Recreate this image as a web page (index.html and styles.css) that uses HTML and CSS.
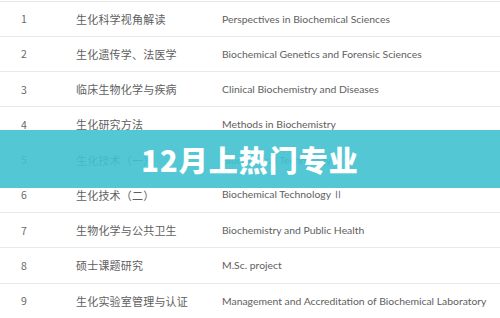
FILE: index.html
```html
<!DOCTYPE html>
<html lang="zh">
<head>
<meta charset="utf-8">
<link rel="stylesheet" href="styles.css">
</head>
<body>
<div class="page">
  <div class="table">
    <div class="row"><span class="num">1</span><span class="cn">生化科学视角解读</span><span class="en">Perspectives in Biochemical Sciences</span></div>
    <div class="row"><span class="num">2</span><span class="cn">生化遗传学、法医学</span><span class="en">Biochemical Genetics and Forensic Sciences</span></div>
    <div class="row"><span class="num">3</span><span class="cn">临床生物化学与疾病</span><span class="en">Clinical Biochemistry and Diseases</span></div>
    <div class="row"><span class="num">4</span><span class="cn">生化研究方法</span><span class="en">Methods in Biochemistry</span></div>
    <div class="row"><span class="num">5</span><span class="cn">生化技术（一）</span><span class="en">Biochemical Technology I</span></div>
    <div class="row"><span class="num">6</span><span class="cn">生化技术（二）</span><span class="en">Biochemical Technology Ⅱ</span></div>
    <div class="row"><span class="num">7</span><span class="cn">生物化学与公共卫生</span><span class="en">Biochemistry and Public Health</span></div>
    <div class="row"><span class="num">8</span><span class="cn">硕士课题研究</span><span class="en">M.Sc. project</span></div>
    <div class="row"><span class="num">9</span><span class="cn">生化实验室管理与认证</span><span class="en">Management and Accreditation of Biochemical Laboratory</span></div>
  </div>
  <div class="banner">12月上热门专业</div>
</div>
</body>
</html>
```
FILE: styles.css
```css
html, body {
  margin: 0;
  padding: 0;
  background: #fff;
}
.page {
  position: relative;
  width: 500px;
  height: 318px;
  overflow: hidden;
  font-family: "Noto Sans CJK SC", "Noto Sans", sans-serif;
}
.table {
  display: flex;
  flex-direction: column;
  padding-top: 0.5px;
}
.row {
  display: grid;
  grid-template-columns: 76px 146px 1fr;
  align-items: center;
  height: 35.25px;
  box-sizing: border-box;
  border-top: 1px solid #e8e8e8;
  font-size: 10.5px;
  color: #5e5e5e;
}
.num {
  padding-left: 21px;
  color: #6a6a6a;
}
.cn {
  font-size: 11px;
  letter-spacing: 0.2px;
}
.en {
  white-space: nowrap;
  font-family: Lato, "Noto Sans", sans-serif;
  font-size: 10.4px;
  color: #606060;
}
.banner {
  position: absolute;
  left: 0;
  right: 0;
  top: 130px;
  height: 58px;
  display: flex;
  align-items: center;
  justify-content: center;
  background: rgba(64, 194, 207, 0.9);
  color: #fff;
  font-family: "Noto Sans CJK SC", sans-serif;
  font-weight: 900;
  font-size: 29px;
  letter-spacing: 1px;
}
```
